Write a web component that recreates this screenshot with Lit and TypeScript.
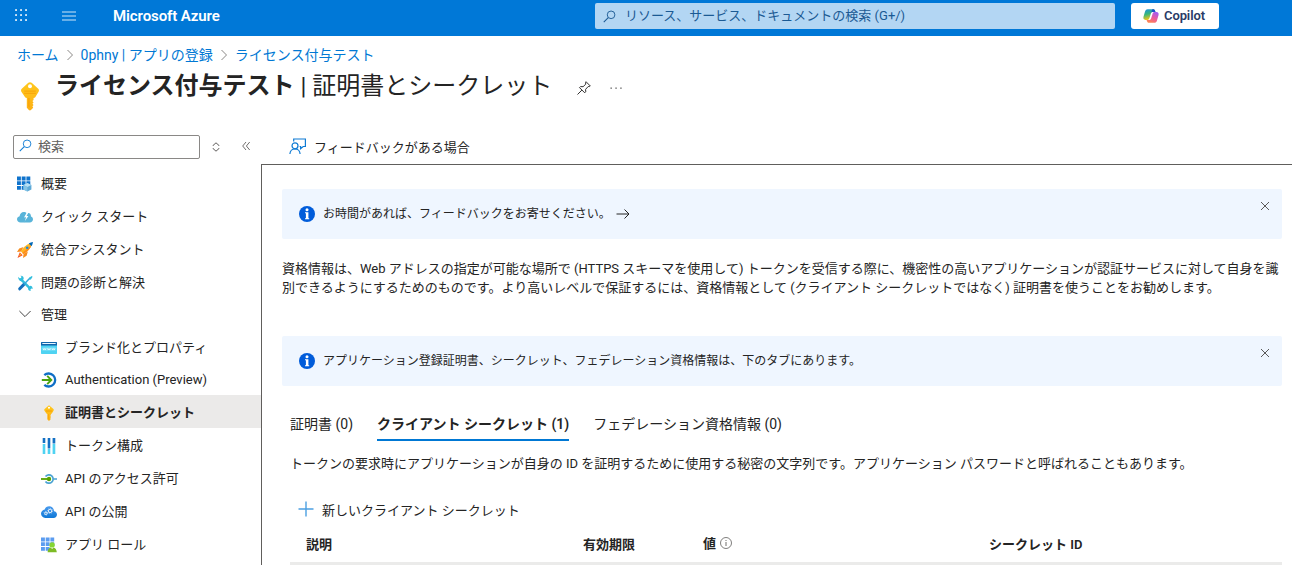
import { LitElement, html, css, svg, nothing } from "lit";
import { customElement, property } from "lit/decorators.js";
import { classMap } from "lit/directives/class-map.js";

const keyShape = svg`
  <path fill="url(#keyG)" d="M8.900.9l3.500 3.200c.5.5.5 1.200.1 1.700L10.800 8.600c-.2.300-.5.400-.9.400v1.100l-.6.6.6.700-.6.700.6.700-.6.700.4.700-1.200 1.300c-.3.3-.8.3-1.100 0l-1.100-1.200V9c-.4 0-.7-.1-.9-.4L3.500 5.800c-.4-.5-.4-1.200.1-1.700L7.100.9c.5-.4 1.300-.4 1.800 0z"/>
  <circle cx="8" cy="2.800" r="1.050" fill="#fff"/>
  <path fill="#f79a00" opacity=".6" d="M4.900 5h6.200v.7H4.900zM4.900 6.200h6.200v.7H4.900zM7 9h.8v5.300l-.8-.8z"/>
  <defs><linearGradient id="keyG" x1="0" y1="0" x2="0" y2="1"><stop offset="0" stop-color="#ffc81c"/><stop offset="1" stop-color="#fdb015"/></linearGradient></defs>`;

const icons: Record<string, unknown> = {
  key: keyShape,
  overview: svg`
    <path fill="#0f73cc" d="M0 .5h3.900v3.900H0zM4.700.5h3.900v3.900H4.700zM9.400.5h3.900v3.900H9.400zM0 5.200h3.900v3.900H0zM4.700 5.200h3.900v3.900H4.700zM9.400 5.200h3.900v3.900H9.400zM0 9.900h3.900v3.800H0zM4.700 9.900h3.900v3.800H4.700z"/>
    <path fill="#5ea9d6" d="M10.400 7.100l4 2v4.300l-4 2.200-4-2.200V9.100z"/><path fill="#b9e0f5" d="M10.400 7.100l4 2-4 2-4-2z"/><path fill="#84c4e6" d="M6.400 9.100l4 2v4.500l-4-2.200z"/>`,
  quick: svg`
    <path fill="#59b4d9" d="M3.600 13.500C1.500 13.500 0 12.200 0 10.300 0 8.700 1.100 7.500 2.600 7.200 2.900 4.700 4.500 3 6.800 3c1.200 0 2 .3 2.700 1L7 9h2l-1.600 4.500z"/>
    <path fill="#59b4d9" d="M10.700 4.200c1.500-.5 3.400.7 3.300 3.200 1.200.4 2 1.500 2 2.900 0 1.900-1.400 3.200-3.200 3.200H7.200V4z"/>
    <path fill="#fff" d="M9.600 3.800L7.200 8.300h1.900l-1.200 3.700L11.400 7H9.500L11.300 3.800z"/>`,
  rocket: svg`
    <path fill="#f78d1e" d="M6.500 5.100L2.200 6.400 0 10l4.300-.6zM10.900 9.500L9.600 13.800 6 16l.6-4.300z"/>
    <path fill="#ffb624" d="M12.700 1.500C9.600 2.500 6.500 5 3.900 9.600l2.500 2.500c4.600-2.600 7.100-5.700 8.100-8.800z"/>
    <path fill="#ff8c1a" d="M14.500 3.300c-1 3.100-3.500 6.200-8.100 8.800L5.200 10.900z"/>
    <path fill="#0067b8" d="M16 0c-1.600.2-3 .7-4.300 1.500l2.800 2.800C15.300 3 15.800 1.600 16 0z"/>
    <circle cx="10.200" cy="5.800" r="1.300" fill="#1a8bd8"/>
    <path fill="#f25022" d="M2.800 10.300l2.900 2.900L.5 16z"/><path fill="#ffb624" d="M3.200 11.500l1.300 1.300-2.600 1.500z"/>`,
  tools: svg`
    <path fill="none" stroke="#32bedd" stroke-width="2.500" d="M4 4.300l9 9"/>
    <path fill="#32bedd" d="M1.300 1.700l1.300 1.500 1.500-.3.300-1.400L3.300.9c1.900-.4 3.600.8 3.400 3L4.900 6.200C2.600 6.300.9 4.400 1.300 1.700zM11 13.500l2.300-2.800c1.600.2 2.600 1.600 2.300 3.400l-1.200-.5-1 .9.500 1.300c-1.600.2-2.800-.7-2.900-2.300z"/>
    <path stroke="#1370bd" stroke-width="3" stroke-linecap="round" d="M2.700 13.800l4-4.200"/>
    <path stroke="#32a9dd" stroke-width="1.500" d="M6.800 9.500L13 3.100"/>
    <path fill="#32bedd" d="M12.100 2.700L14.800 1l.8.800-1.700 2.800-1.300.1z"/>`,
  brand: svg`
    <rect y="2" width="16" height="12" rx=".7" fill="#4fd3f2"/><path fill="#1265ab" d="M.7 2h14.600c.4 0 .7.300.7.700V5.400H0V2.700c0-.4.300-.7.700-.7z"/>
    <path fill="#e8f6ff" d="M1.300 3h13.400v1H1.300z"/><path fill="#bdf4ff" d="M1.500 7.300h13v3.500h-13z" opacity=".35"/>
    <path fill="none" stroke="#fff" stroke-width=".7" d="M2 8.300l.7 1.600.8-1.300.8 1.300.7-1.600M6.500 8.300l.7 1.600.8-1.300.8 1.300.7-1.600M11 8.300l.7 1.600.8-1.300.8 1.300.7-1.600"/>`,
  auth: svg`
    <path fill="none" stroke="#0f6fc6" stroke-width="2.300" d="M3.300 3.200A6.500 6.500 0 1 1 3.300 12.800"/>
    <path fill="none" stroke="#4aa30f" stroke-width="1.900" d="M.8 8h9M6.200 3.900L10.300 8l-4.100 4.100"/>`,
  token: svg`
    <path fill="#50d3f2" d="M1.700 6h2.600v10H1.700zM6.700 11h2.600v5H6.700zM11.600 6h2.700v10h-2.700z"/>
    <path fill="#1370c4" d="M1.700 0h2.600v5H1.700zM6.700 0h2.600v10.500H6.700zM11.600 0h2.700v5.500h-2.700z"/>`,
  perm: svg`
    <path fill="none" stroke="#4aa3d2" stroke-width="1.700" d="M4.500 5.600A4.200 4.200 0 1 1 4.500 10.400M12.300 8H16"/>
    <path stroke="#57a300" stroke-width="1.800" d="M0 8h7"/><circle cx="8" cy="8" r="2.200" fill="#57a300"/>`,
  cloud: svg`
    <path fill="url(#cloudG)" d="M16 10.500c0-1.800-1.300-3.100-3-3.300C12.900 4.300 10.900 2.200 8.200 2.200c-2.100 0-3.800 1.200-4.500 3.200C1.600 5.700 0 7.400 0 9.600 0 12 1.900 13.900 4.300 13.900h8.200c2 0 3.500-1.500 3.500-3.400z"/>
    <g fill="none" stroke="#fff" stroke-width="1" opacity=".9"><circle cx="9.100" cy="6.900" r="1.700"/><circle cx="4.900" cy="9.300" r="1.200"/></g>
    <g fill="none" stroke="#fff" stroke-width=".7" stroke-dasharray=".9 1" opacity=".8"><circle cx="9.100" cy="6.900" r="2.500"/><circle cx="4.900" cy="9.300" r="1.900"/></g>
    <defs><linearGradient id="cloudG" x1="0" y1="1" x2="0" y2="0"><stop offset="0" stop-color="#0f78d7"/><stop offset="1" stop-color="#4a9bee"/></linearGradient></defs>`,
  roles: svg`
    <path fill="#5b9cf0" d="M0 .5h3.900v3.900H0zM4.700.5h3.900v3.900H4.700zM9.400.5h3.800v3.900H9.400zM0 5.200h3.900v3.900H0zM4.700 5.200h3.900v3.900H4.700zM9.400 5.200h3.800v3.900H9.400zM0 9.900h3.900v3.800H0zM4.700 9.900h3.900v3.800H4.700z"/>
    <path fill="#7dbb25" d="M6.600 15.300c.1-2.800 1.300-4.400 3.100-4.800l1.400 1.400 1.400-1.400c1.800.4 3.100 2 3.300 4.800z"/><circle cx="11.100" cy="7.900" r="2.700" fill="#86d633"/>`,
};

const navTop = [
  { icon: "overview", label: "概要" },
  { icon: "quick", label: "クイック スタート" },
  { icon: "rocket", label: "統合アシスタント" },
  { icon: "tools", label: "問題の診断と解決" },
];
const navManage = [
  { icon: "brand", label: "ブランド化とプロパティ", first: true },
  { icon: "auth", label: "Authentication (Preview)" },
  { icon: "key", label: "証明書とシークレット", selected: true },
  { icon: "token", label: "トークン構成" },
  { icon: "perm", label: "API のアクセス許可" },
  { icon: "cloud", label: "API の公開" },
  { icon: "roles", label: "アプリ ロール" },
];

@customElement("info-banner")
class InfoBanner extends LitElement {
  @property() text = "";
  @property({ type: Boolean }) arrow = false;
  static styles = css`
    :host { display: flex; height: 50px; box-sizing: border-box; background: #eff6ff; border-radius: 2px; padding: 0 11px 0 17px; font-size: 12px; color: #242424; }
    .row { display: flex; align-items: center; flex: 1; }
    .label { margin-left: 8px; line-height: 18px; padding-bottom: 1px; }
    .arrow { margin-left: 5px; }
    .close { margin-top: 11px; }
    svg { display: block; flex: none; }
  `;
  render() {
    return html`
      <div class="row">
        <svg width="16" height="16" viewBox="0 0 16 16"><circle cx="8" cy="8" r="8" fill="#015cda"/><circle cx="8" cy="3.800" r="1.500" fill="#fff"/><path fill="#fff" d="M6 6.300h3.400v6h.8v1H6v-1h.9V7.300H6z"/></svg>
        <span class="label">${this.text}</span>
        ${this.arrow ? html`<svg class="arrow" width="14" height="12" viewBox="0 0 14 12"><path d="M.5 6h12.500M8.500 1.500L13 6l-4.500 4.500" fill="none" stroke="#242424"/></svg>` : nothing}
      </div>
      <svg class="close" width="12" height="12" viewBox="0 0 12 12"><path d="M2 2l8 8M10 2l-8 8" stroke="#494847" stroke-width=".9"/></svg>`;
  }
}

@customElement("side-item")
class SideItem extends LitElement {
  @property() icon = "";
  @property() label = "";
  @property({ type: Boolean }) nested = false;
  @property({ type: Boolean }) first = false;
  @property({ type: Boolean }) selected = false;
  static styles = css`
    :host { display: block; }
    .item { display: flex; align-items: center; gap: 8px; height: 33px; box-sizing: border-box; padding: 2px 0 0 17px; line-height: 19px; }
    .nested { padding-left: 41px; }
    .first { padding-top: 4px; }
    .selected { background: #ebeae9; font-weight: 700; }
    svg { display: block; flex: none; }
  `;
  render() {
    return html`<div class=${classMap({ item: true, nested: this.nested, first: this.first, selected: this.selected })}>
      <svg width="16" height="16" viewBox="0 0 16 16">${icons[this.icon]}</svg><span>${this.label}</span>
    </div>`;
  }
}

@customElement("app-root")
class AppRoot extends LitElement {
  static styles = css`
    :host { display: flex; flex-direction: column; height: 565px; overflow: hidden; background: #fff; color: #242424; font: 13px/19px Roboto, "Noto Sans CJK JP", sans-serif; }
    svg { display: block; flex: none; }
    .top { display: flex; align-items: flex-start; height: 36px; flex: none; background: #0078d7; box-sizing: border-box; padding: 3px 73px 0 15px; }
    .waffle { margin-top: 6px; }
    .burger { margin: 7px 0 0 34px; }
    .brand { margin: 4px 0 0 37px; font-size: 15px; font-weight: 600; line-height: 19px; color: #fff; letter-spacing: -.1px; flex: 1; }
    .find { display: flex; align-items: center; width: 520px; height: 26px; box-sizing: border-box; padding-left: 8px; gap: 9px; background: #b3d6f3; color: #1b5a94; border-radius: 2px; }
    .find span { margin-bottom: 1px; }
    .copilot { display: flex; align-items: center; width: 88px; height: 26px; box-sizing: border-box; margin-left: 16px; padding-left: 12px; gap: 5px; background: #fff; border-radius: 3px; color: #2a3b66; font-weight: 600; letter-spacing: -.1px; }
    .copilot span { margin-bottom: 1px; }
    .crumbs { display: flex; align-items: center; height: 20px; margin-top: 9px; padding-left: 17px; font-size: 14px; line-height: 20px; color: #0078d4; flex: none; }
    .crumbs svg { margin: 0 7px 0 7px; }
    .title { display: flex; align-items: center; height: 34px; margin-top: 4px; padding-left: 15px; flex: none; }
    .title h1 { margin: 0 0 0 10px; font-size: 24px; line-height: 32px; font-weight: 400; white-space: nowrap; }
    .title b { font-weight: 700; }
    .bigkey { margin-top: 19px; }
    .pin { margin: 4px 0 0 24px; }
    .dots { margin: 4px 0 0 18px; }
    .body { display: grid; grid-template-columns: 261px 1fr; flex: 1; margin-top: 27px; min-height: 0; }
    .tools { display: flex; align-items: center; height: 34px; }
    .filter { display: flex; align-items: center; width: 187px; height: 24px; box-sizing: border-box; border: 1px solid #8a8886; border-radius: 2px; margin: 0 0 0 13px; padding-left: 5px; gap: 6px; color: #605e5c; }
    .filter svg { margin-bottom: 4px; }
    .filter span { margin-bottom: 2px; }
    .sort { margin-left: 12px; }
    .fold { margin: 0 0 2px 22px; }
    .group { margin: 2px 0 -2px; }
    .head { display: flex; align-items: center; height: 33px; gap: 10px; padding: 3px 0 0 19px; box-sizing: border-box; }
    .head svg { margin-bottom: 1px; }
    .right { display: flex; flex-direction: column; min-width: 0; }
    .cmd { display: flex; align-items: center; height: 34px; box-sizing: border-box; padding: 0 0 0 28px; gap: 8px; flex: none; }
    .cmd svg { margin-bottom: 1px; }
    .pane { flex: 1; border: solid #605e5c; border-width: 1px 0 0 1px; padding: 24px 10px 0 20px; min-height: 0; }
    .lead { margin: 20px 0 39px; white-space: nowrap; }
    .tabs { display: flex; gap: 24px; margin: 22px 0 0 8px; height: 33px; font-size: 14px; }
    .tab { box-sizing: border-box; height: 33px; line-height: 20px; padding-top: 6px; }
    .on { font-weight: 600; border-bottom: 2px solid #0078d4; }
    .desc { margin: 13px 0 0 8px; }
    .add { display: flex; align-items: center; gap: 8px; margin: 27px 0 0 16px; height: 20px; }
    .add svg { margin-bottom: 2px; }
    .cols { display: grid; grid-template-columns: 277px 120px 286px 1fr; align-items: center; height: 45px; box-sizing: border-box; padding: 7px 0 0 16px; margin-left: 8px; font-weight: 600; border-bottom: 3px solid #ebebea; }
    .value { display: flex; align-items: center; gap: 4px; padding-bottom: 2px; }
    .value svg { margin-bottom: 1px; }
  `;
  private lens(size: number, color: string) {
    return html`<svg width=${size} height=${size} viewBox="0 0 14 14"><circle cx="8.700" cy="5.200" r="4.100" fill="none" stroke=${color}/><path d="M5.700 8.100L.8 13" stroke=${color} stroke-width="1.100"/></svg>`;
  }
  private chevron() {
    return html`<svg width="8" height="12" viewBox="0 0 8 12"><path d="M1.500 1l5 5-5 5" fill="none" stroke="#8a8886"/></svg>`;
  }
  render() {
    return html`
      <header class="top">
        <svg class="waffle" width="13" height="13" viewBox="0 0 13 13" fill="#fff">${[0, 5, 10].map((y) => [0, 5, 10].map((x) => svg`<rect x=${x + 0.2} y=${y + 0.2} width="1.700" height="1.700"/>`))}</svg>
        <svg class="burger" width="14" height="12" viewBox="0 0 14 12"><path d="M0 2h14M0 6h14M0 10h14" stroke="#8ac1ed" stroke-width="1.600"/></svg>
        <span class="brand">Microsoft Azure</span>
        <div class="find">${this.lens(13, "#1b5a94")}<span>リソース、サービス、ドキュメントの検索 (G+/)</span></div>
        <div class="copilot">
          <svg width="16" height="16" viewBox="0 0 16 16">
            <defs>
              <linearGradient id="ca" x1="0" y1="0" x2=".3" y2="1"><stop offset="0" stop-color="#1a8fe8"/><stop offset=".5" stop-color="#36b67c"/><stop offset="1" stop-color="#f5c518"/></linearGradient>
              <linearGradient id="cb" x1=".7" y1="0" x2=".2" y2="1"><stop offset="0" stop-color="#a45cf0"/><stop offset=".5" stop-color="#ee5a9a"/><stop offset="1" stop-color="#ff8a4c"/></linearGradient>
            </defs>
            <path fill="url(#ca)" d="M4.700 1.200h5.500c1 0 1.500.6 1.800 1.500l.4 1.400H9.600c-.9 0-1.400.5-1.700 1.400L6.500 10c-.4 1.300-1 1.900-2.200 1.900H2.500C.8 11.900 0 10.600.5 8.800l1.600-5.500C2.600 1.900 3.400 1.200 4.700 1.200z"/>
            <path fill="#1b52c4" d="M9.300 1.200h1c1 0 1.500.6 1.800 1.500l.4 1.400H9.600c-.7 0-1.200.3-1.500 1z"/>
            <path fill="url(#cb)" d="M11.300 14.800H5.800c-1 0-1.500-.6-1.800-1.500l-.4-1.400h2.800c.9 0 1.400-.5 1.700-1.400L9.500 6c.4-1.300 1-1.900 2.200-1.900h1.800c1.700 0 2.500 1.300 2 3.100l-1.600 5.500c-.5 1.400-1.300 2.100-2.600 2.100z"/>
          </svg><span>Copilot</span>
        </div>
      </header>
      <nav class="crumbs"><span>ホーム</span>${this.chevron()}<span>0phny | アプリの登録</span>${this.chevron()}<span>ライセンス付与テスト</span></nav>
      <div class="title">
        <svg class="bigkey" width="30" height="30" viewBox="0 0 16 16">${keyShape}</svg>
        <h1><b>ライセンス付与テスト</b> | 証明書とシークレット</h1>
        <svg class="pin" width="16" height="16" viewBox="0 0 16 16"><path d="M10 1.700l4.300 4.300-.9.600-1.200-.1-2.600 2.800.1 2.500-1 1L3.500 7.600l1-1 2.600.1 2.700-2.600-.3-1.500zM5.900 10.100L1.500 14.500" fill="none" stroke="#323130"/></svg>
        <svg class="dots" width="12" height="4" viewBox="0 0 12 4" fill="#555"><rect x=".5" y="1.500" width="1.300" height="1.300"/><rect x="5.400" y="1.500" width="1.300" height="1.300"/><rect x="10.300" y="1.500" width="1.300" height="1.300"/></svg>
      </div>
      <div class="body">
        <aside>
          <div class="tools">
            <div class="filter">${this.lens(13, "#0f7bd4")}<span>検索</span></div>
            <svg class="sort" width="8" height="10" viewBox="0 0 8 10"><path d="M1 4V3.500L4 .8l3 2.700V4M1 6v.5l3 2.700 3-2.700V6" fill="none" stroke="#605e5c"/></svg>
            <svg class="fold" width="8" height="10" viewBox="0 0 8 10"><path d="M4 1L.7 5 4 9M7.700 1L4.400 5l3.300 4" fill="none" stroke="#605e5c" stroke-width=".9"/></svg>
          </div>
          <div class="group">${navTop.map((n) => html`<side-item icon=${n.icon} label=${n.label}></side-item>`)}</div>
          <div class="head"><svg width="12" height="8" viewBox="0 0 12 8"><path d="M.4 1L6 6.600 11.600 1" fill="none" stroke="#444"/></svg><span>管理</span></div>
          ${navManage.map((n) => html`<side-item nested icon=${n.icon} label=${n.label} ?first=${n.first} ?selected=${n.selected}></side-item>`)}
        </aside>
        <section class="right">
          <div class="cmd">
            <svg width="17" height="17" viewBox="0 0 17 17" fill="none" stroke="#0f7bd4" stroke-width="1.200"><circle cx="6" cy="7.800" r="3"/><path d="M.9 16c.2-3 2.200-5 5.100-5s4.900 2 5.100 5M4.700 3.500V1H16.400v7.500h-2.200l-2.600 2.200V8.500h-1"/></svg>
            <span>フィードバックがある場合</span>
          </div>
          <main class="pane">
            <info-banner arrow text="お時間があれば、フィードバックをお寄せください。"></info-banner>
            <p class="lead">資格情報は、Web アドレスの指定が可能な場所で (HTTPS スキーマを使用して) トークンを受信する際に、機密性の高いアプリケーションが認証サービスに対して自身を識<br>別できるようにするためのものです。より高いレベルで保証するには、資格情報として (クライアント シークレットではなく) 証明書を使うことをお勧めします。</p>
            <info-banner text="アプリケーション登録証明書、シークレット、フェデレーション資格情報は、下のタブにあります。"></info-banner>
            <div class="tabs"><div class="tab">証明書 (0)</div><div class="tab on">クライアント シークレット (1)</div><div class="tab">フェデレーション資格情報 (0)</div></div>
            <div class="desc">トークンの要求時にアプリケーションが自身の ID を証明するために使用する秘密の文字列です。アプリケーション パスワードと呼ばれることもあります。</div>
            <div class="add"><svg width="16" height="16" viewBox="0 0 16 16"><path d="M8 .5v15M.5 8h15" stroke="#4ca0e2" stroke-width="1.400"/></svg><span>新しいクライアント シークレット</span></div>
            <div class="cols"><span>説明</span><span>有効期限</span><span class="value">値<svg width="12" height="12" viewBox="0 0 12 12"><circle cx="6" cy="6" r="5.500" fill="none" stroke="#605e5c" stroke-width=".8"/><path d="M6 5v4M6 3v1" stroke="#605e5c" stroke-width=".9"/></svg></span><span>シークレット ID</span></div>
          </main>
        </section>
      </div>`;
  }
}
